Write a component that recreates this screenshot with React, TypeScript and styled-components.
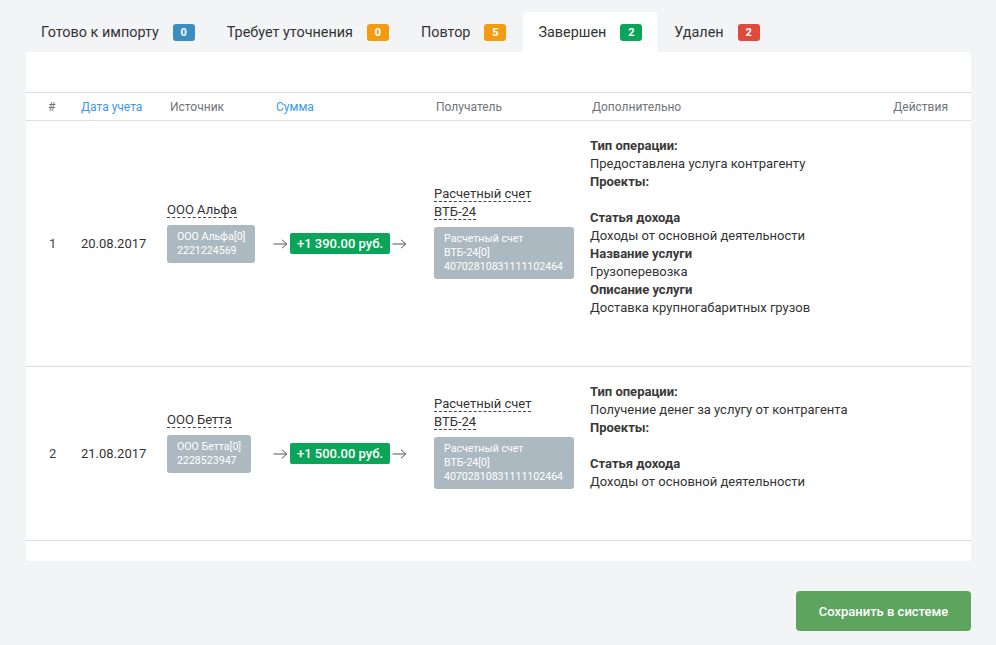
import styled, { createGlobalStyle } from "styled-components";

const GlobalStyle = createGlobalStyle`
  html, body {
    margin: 0;
    padding: 0;
    background: #f3f4f6;
    font-family: Roboto, "Liberation Sans", Arial, sans-serif;
    color: #333;
  }
`;

const Page = styled.div`
  padding: 12px 25px 14px 26px;
  display: flex;
  flex-direction: column;
`;

const Tabs = styled.div`
  display: flex;
  gap: 2px;
`;

const Tab = styled.div<{ $active?: boolean }>`
  display: flex;
  align-items: center;
  height: 40px;
  padding: 0 15px;
  font-size: 14.4px;
  color: #333;
  background: ${(p) => (p.$active ? "#fff" : "transparent")};
  border-radius: 4px 4px 0 0;
  cursor: pointer;
`;

const Badge = styled.span<{ $color: string }>`
  display: inline-flex;
  align-items: center;
  justify-content: center;
  margin-left: 14px;
  min-width: 22px;
  height: 17px;
  padding: 0 4px;
  box-sizing: border-box;
  border-radius: 3px;
  background: ${(p) => p.$color};
  color: #fff;
  font-size: 11px;
  font-weight: 700;
`;

const Card = styled.div`
  background: #fff;
  border-radius: 4px;
  padding: 40px 0 20px;
`;

const cols = "55px 86px 106px 161px 156px 1fr 100px";

const HeadRow = styled.div`
  display: grid;
  grid-template-columns: ${cols};
  height: 29px;
  align-items: center;
  border-top: 1px solid #dedede;
  border-bottom: 1px solid #dedede;
  box-sizing: border-box;
`;

const Th = styled.div<{ $sort?: boolean; $right?: boolean; $pad?: number }>`
  font-size: 12px;
  color: ${(p) => (p.$sort ? "#3a97ee" : "#6f7479")};
  padding-left: ${(p) => p.$pad ?? 0}px;
  padding-right: ${(p) => (p.$right ? "23px" : "0")};
  text-align: ${(p) => (p.$right ? "right" : "left")};
  cursor: ${(p) => (p.$sort ? "pointer" : "default")};
`;

const Row = styled.div`
  display: grid;
  grid-template-columns: ${cols};
  align-items: center;
  border-bottom: 1px solid #dedede;
`;

const Cell = styled.div`
  font-size: 13px;
  color: #333;
`;

const IndexCell = styled(Cell)`
  padding-left: 23px;
  color: #444;
`;

const Party = styled.div`
  display: flex;
  flex-direction: column;
  align-items: flex-start;
  margin-bottom: 24px;
`;

const PartyName = styled.div<{ $width: number }>`
  max-width: ${(p) => p.$width}px;
  font-size: 13px;
  line-height: 18px;
  margin-bottom: 6px;
`;

const Dashed = styled.span`
  border-bottom: 1px dashed #444;
  cursor: pointer;
`;

const InfoBox = styled.div<{ $width?: number }>`
  width: ${(p) => (p.$width ? `${p.$width}px` : "auto")};
  box-sizing: border-box;
  background: #adb9c0;
  color: #fff;
  border-radius: 3px;
  padding: 5px 10px;
  font-size: 10.6px;
  line-height: 14px;
`;

const AmountWrap = styled.div`
  display: flex;
  align-items: center;
  gap: 2px;
`;

const Amount = styled.span`
  background: #0ba55a;
  color: #fff;
  font-size: 13px;
  font-weight: 500;
  padding: 2px 7px;
  line-height: 17px;
  border-radius: 2px;
  white-space: nowrap;
`;

const Extra = styled.div`
  padding: 16px 0 49px;
  font-size: 13px;
  line-height: 18px;
  color: #333;
`;

const Label = styled.div`
  font-weight: 700;
  color: #3a3a3a;
`;

const Footer = styled.div`
  display: flex;
  justify-content: flex-end;
  margin-top: 30px;
`;

const SaveButton = styled.button`
  width: 175px;
  height: 40px;
  border: none;
  border-radius: 4px;
  background: #5da55f;
  color: #fff;
  font-family: inherit;
  font-size: 13px;
  font-weight: 500;
  cursor: pointer;
`;

const Arrow = () => (
  <svg width="15" height="10" viewBox="0 0 15 10">
    <path d="M0.5 5 H13.5 M9 0.8 L13.8 5 L9 9.2" fill="none" stroke="#555" strokeWidth="1" />
  </svg>
);

type Entry = { label: string; value: string };

const rows = [
  {
    n: 1,
    date: "20.08.2017",
    source: "ООО Альфа",
    sourceBox: ["ООО Альфа[0]", "2221224569"],
    amount: "+1 390.00 руб.",
    extra: [
      { label: "Тип операции:", value: "Предоставлена услуга контрагенту" },
      { label: "Проекты:", value: "" },
      { label: "Статья дохода", value: "Доходы от основной деятельности" },
      { label: "Название услуги", value: "Грузоперевозка" },
      { label: "Описание услуги", value: "Доставка крупногабаритных грузов" },
    ] as Entry[],
  },
  {
    n: 2,
    date: "21.08.2017",
    source: "ООО Бетта",
    sourceBox: ["ООО Бетта[0]", "2228523947"],
    amount: "+1 500.00 руб.",
    extra: [
      { label: "Тип операции:", value: "Получение денег за услугу от контрагента" },
      { label: "Проекты:", value: "" },
      { label: "Статья дохода", value: "Доходы от основной деятельности" },
    ] as Entry[],
  },
];

const tabs = [
  { title: "Готово к импорту", count: 0, color: "#3b8ec0" },
  { title: "Требует уточнения", count: 0, color: "#f39c12" },
  { title: "Повтор", count: 5, color: "#f39c12" },
  { title: "Завершен", count: 2, color: "#0ba55a", active: true },
  { title: "Удален", count: 2, color: "#e04a3a" },
];

export default function App() {
  return (
    <>
      <GlobalStyle />
      <Page>
        <Tabs>
          {tabs.map((t) => (
            <Tab key={t.title} $active={t.active}>
              {t.title}
              <Badge $color={t.color}>{t.count}</Badge>
            </Tab>
          ))}
        </Tabs>
        <Card>
          <HeadRow>
            <Th $pad={22}>#</Th>
            <Th $sort>Дата учета</Th>
            <Th $pad={3}>Источник</Th>
            <Th $sort $pad={3}>Сумма</Th>
            <Th $pad={2}>Получатель</Th>
            <Th $pad={2}>Дополнительно</Th>
            <Th $right>Действия</Th>
          </HeadRow>
          {rows.map((r) => (
            <Row key={r.n}>
              <IndexCell>{r.n}</IndexCell>
              <Cell>{r.date}</Cell>
              <Cell>
                <Party>
                  <PartyName $width={100}>
                    <Dashed>{r.source}</Dashed>
                  </PartyName>
                  <InfoBox>
                    {r.sourceBox[0]}
                    <br />
                    {r.sourceBox[1]}
                  </InfoBox>
                </Party>
              </Cell>
              <Cell>
                <AmountWrap>
                  <Arrow />
                  <Amount>{r.amount}</Amount>
                  <Arrow />
                </AmountWrap>
              </Cell>
              <Cell>
                <Party>
                  <PartyName $width={120}>
                    <Dashed>Расчетный счет ВТБ-24</Dashed>
                  </PartyName>
                  <InfoBox $width={140}>
                    Расчетный счет
                    <br />
                    ВТБ-24[0]
                    <br />
                    40702810831111102464
                  </InfoBox>
                </Party>
              </Cell>
              <Extra>
                {r.extra.map((e) => (
                  <div key={e.label}>
                    <Label>{e.label}</Label>
                    {e.value ? <div>{e.value}</div> : e.label === "Проекты:" ? <div>&nbsp;</div> : null}
                  </div>
                ))}
              </Extra>
              <Cell />
            </Row>
          ))}
        </Card>
        <Footer>
          <SaveButton>Сохранить в системе</SaveButton>
        </Footer>
      </Page>
    </>
  );
}
